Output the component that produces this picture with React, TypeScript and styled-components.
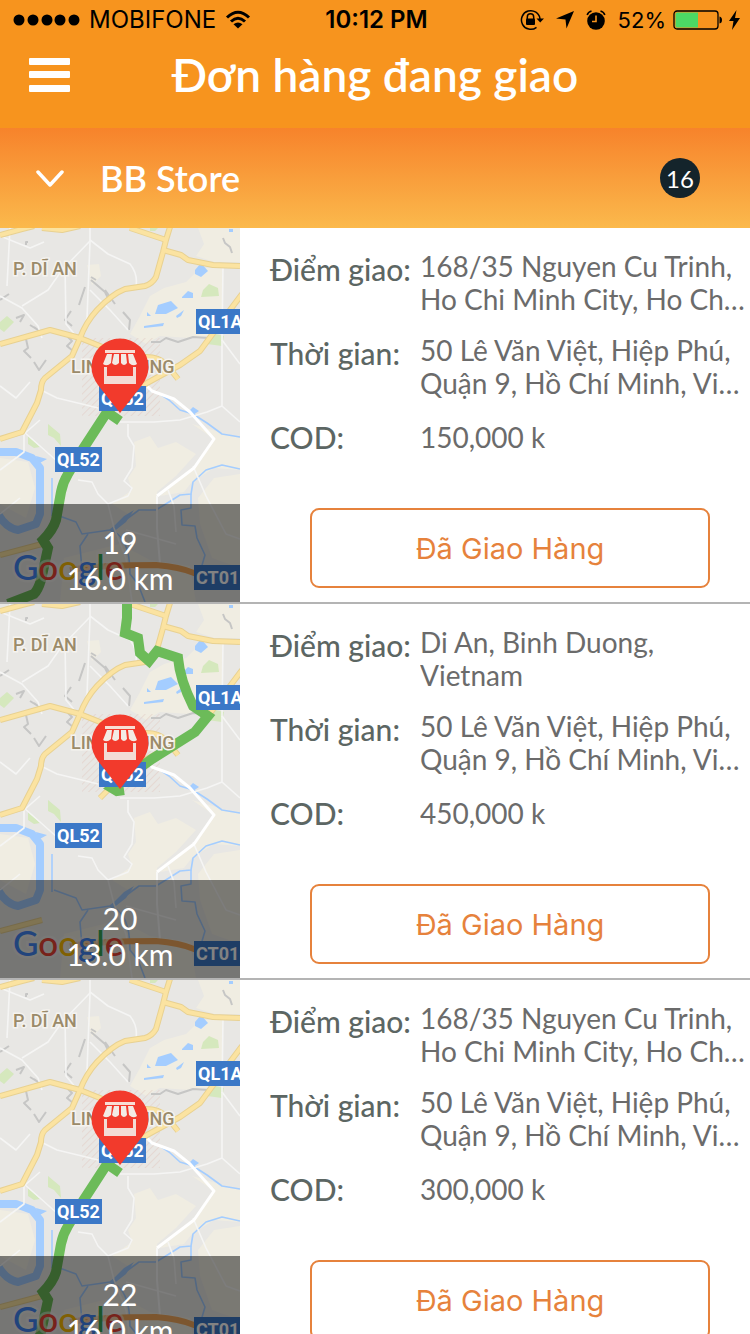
import React, { useId } from 'react';
import styled, { createGlobalStyle } from 'styled-components';

const GlobalStyle = createGlobalStyle`
  *, *::before, *::after { box-sizing: border-box; }
  body { margin: 0; background: #fff; font-family: Lato, sans-serif; }
  h1, h2, p, ul, dl, dd { margin: 0; padding: 0; }
  button { font: inherit; cursor: pointer; }
`;

const Screen = styled.div`
  display: flex;
  flex-direction: column;
  height: 100vh;
  overflow: hidden;
`;

const Header = styled.header`
  flex: none;
  background: #f7941e;
  padding-bottom: 18px;
`;

const StatusBar = styled.div`
  display: grid;
  grid-template-columns: 1fr auto 1fr;
  align-items: center;
  height: 40px;
  padding: 0 10px 0 13px;
  color: #000;
  font-family: Inter, sans-serif;
  font-size: 24px;
  line-height: 40px;
`;

const StatusGroup = styled.div<{ $end?: boolean }>`
  display: flex;
  align-items: center;
  justify-content: ${(p) => (p.$end ? 'flex-end' : 'flex-start')};
  gap: ${(p) => (p.$end ? '7px' : '9px')};
`;

const Clock = styled.span`
  font-size: 24px;
  font-weight: 600;
`;

const Percent = styled.span`
  font-size: 22px;
`;

const StatusIcons = styled.span`
  display: flex;
  align-items: center;
  gap: 12px;
  margin-right: 5px;
`;

const NavBar = styled.div`
  display: grid;
  grid-template-columns: 72px 1fr 72px;
  align-items: center;
  height: 70px;
`;

const MenuButton = styled.button`
  display: flex;
  justify-content: flex-end;
  padding: 0 2px 0 0;
  border: 0;
  background: none;
  color: #fff;
`;

const Title = styled.h1`
  color: #fff;
  font-size: 46px;
  font-weight: 600;
  line-height: 70px;
  text-align: center;
`;

const StoreBar = styled.button`
  flex: none;
  display: flex;
  align-items: center;
  width: 100%;
  height: 100px;
  padding: 0 50px 0 36px;
  border: 0;
  background: linear-gradient(#f7832b, #fbb94c);
  color: #fff;
  text-align: left;
`;

const StoreName = styled.span`
  flex: 1;
  padding-left: 36px;
  font-size: 36px;
  font-weight: 600;
  line-height: 48px;
`;

const Count = styled.span`
  width: 40px;
  height: 40px;
  border-radius: 50%;
  background: #14242b;
  font-size: 24px;
  line-height: 42px;
  text-align: center;
`;

const OrderList = styled.ul`
  flex: 1;
  min-height: 0;
  overflow-y: auto;
  list-style: none;
  scrollbar-width: none;
`;

const OrderRow = styled.li`
  display: flex;
  border-bottom: 2px solid #b4b4b4;
`;

const MapPane = styled.div`
  position: relative;
  flex: none;
  width: 240px;
  height: 374px;
  overflow: hidden;
`;

const Distance = styled.div`
  position: absolute;
  inset: auto 0 0;
  padding: 20px 0 6px;
  background: rgba(0, 0, 0, 0.49);
  color: #fff;
  font-size: 30px;
  line-height: 36px;
  text-align: center;
`;

const Details = styled.div`
  flex: 1;
  min-width: 0;
  display: flex;
  flex-direction: column;
  justify-content: space-between;
  padding: 22px 0 14px 30px;
`;

const Facts = styled.dl`
  display: grid;
  gap: 18px;
`;

const Fact = styled.div`
  display: grid;
  grid-template-columns: 150px 1fr;
`;

const Label = styled.dt`
  color: #5c6663;
  font-size: 30px;
  font-weight: 500;
  line-height: 38px;
  white-space: nowrap;
`;

const Value = styled.dd<{ $single?: boolean }>`
  display: -webkit-box;
  overflow: hidden;
  -webkit-box-orient: vertical;
  -webkit-line-clamp: 2;
  color: #6b6b6b;
  font-size: 28px;
  line-height: ${(p) => (p.$single ? '38px' : '33px')};
`;

const DeliveredButton = styled.button`
  height: 80px;
  margin: 0 40px;
  border: 2px solid #e6823c;
  border-radius: 9px;
  background: #fff;
  color: #e6823c;
  font-family: Inter, sans-serif;
  font-size: 29px;
`;

type Order = { id: number; km: string; address: string; cod: string; route: 'south' | 'north' };

const ORDERS: Order[] = [
  { id: 19, km: '16.0 km', address: '168/35 Nguyen Cu Trinh, Ho Chi Minh City, Ho Chi Minh, Vietnam', cod: '150,000 k', route: 'south' },
  { id: 20, km: '13.0 km', address: 'Di An, Binh Duong, Vietnam', cod: '450,000 k', route: 'north' },
  { id: 22, km: '16.0 km', address: '168/35 Nguyen Cu Trinh, Ho Chi Minh City, Ho Chi Minh, Vietnam', cod: '300,000 k', route: 'south' },
];

const ROUTES = {
  south: 'M120 193 L107 184 L83 221 L68 246 Q63 254 61 264 L56 292 Q53 302 43 312 L48 320 L45 334 L41 352 Q38 362 34 366 L8 376',
  north: 'M127 0 V14 L125 29 L138 34 L140 49 L149 57 L157 47 L178 54 Q180 76 193 102 L208 112 L195 128 L152 155 L120 178 L112 184 L117 187 L124 186',
};

const ROADS = [
  'M0 7 L22 1 L34 -2',
  'M42 0 L62 2 L80 -2',
  'M130 0 L166 12',
  'M170 -1 L166 12 L163 24 L156 49 Q152 56 145 58 L125 61 Q112 66 97 82 Q86 94 80 110 L72 128 L45 150 Q41 154 41 162 L37 175 L22 204 L0 211',
  'M163 22 L181 27 L188 32 L213 37 L240 38',
  'M0 116 L50 102 L80 110 L100 118 L120 126 L143 129 Q158 128 166 136 L178 151',
  'M242 66 L230 82 L214 104 L200 123 L180 137 L147 155 L118 176 L100 194',
  'M0 327 L42 316',
];

const LANES = [
  'M10 0 L7 58', 'M0 68 L22 80 L38 98 L42 110', 'M90 0 V14 L87 90 L82 104', 'M90 12 L108 26 L130 36 Q138 46 136 58',
  'M90 13 L62 42 L48 62 L22 78', 'M65 38 L66 96 L76 108', 'M90 62 L110 82 L128 102', 'M0 158 L16 170 L30 154',
  'M41 162 L57 170 L82 176 L98 180', 'M0 242 L24 224 V206 L40 192', 'M24 204 L40 218 L58 234',
  'M120 194 L154 194 L180 192 L207 184 L222 178 V112', 'M128 196 V208 L134 218 L132 240 L124 253 L132 260 L128 268 L108 276',
  'M78 252 L92 254 L98 266 L108 276 L114 300 L126 330 L132 374', 'M223 36 L222 112 L240 136', 'M193 238 L206 268 L226 306 L240 311',
  'M168 262 L174 278 L176 304', 'M0 8 L30 20 L44 14', 'M126 302 L176 316', 'M222 178 L240 194', 'M0 286 L20 270',
];

const MAIN_LANES = ['M147 158 L152 163 L174 171 L190 184 L214 211 L194 240 L157 268'];

const ALLEYS = [
  'M28 14 H26 V17 M91 49 L96 52 M91 52 L105 64 L110 74 M85 59 L79 77', 'M123 84 L130 92 L129 102 M71 83 L65 92 L72 98',
  'M16 90 L24 87 L20 94 M30 97 L38 102 L34 99', 'M26 111 L28 120 L24 123 L31 130 M34 134 L39 142 L46 132',
  'M68 109 L72 113 L67 118 L73 123', 'M223 10 L225 15 L230 19 L232 25 M0 72 L9 66 M151 114 H160 L166 110 L178 114 L193 109 L209 110', 'M105 62 L115 76',
];

const STREAMS = [
  'M52 250 V288', 'M149 162 L160 166 L169 172 L180 182 L193 186 L207 195 L222 206 L240 209',
  'M240 241 L222 237 L206 242 L193 254 L191 266 L180 267 L169 274 L156 282 L139 282 L128 290 L110 302',
  'M110 302 L82 306 L76 294 L54 286', 'M88 306 L80 318 L82 342', 'M191 266 V280 L181 282 L182 297 L195 298 L197 310 L205 327 L200 344', 'M110 302 Q130 308 130 346 L138 356 L145 374',
];

const Path = ({ d, color, width }: { d: string; color: string; width: number }) => (
  <path d={d} fill="none" stroke={color} strokeWidth={width} strokeLinejoin="round" />
);

function RouteMap({ route }: { route: Order['route'] }) {
  const hatch = useId();
  return (
    <svg width="240" height="374" viewBox="0 0 240 374" role="img" aria-label="Linh Trung">
      <defs>
        <pattern id={hatch} width="5" height="5" patternUnits="userSpaceOnUse" patternTransform="rotate(45)">
          <path d="M0 0V5" stroke="#e2c9c1" strokeWidth="1" />
        </pattern>
      </defs>
      <rect width="240" height="374" fill="#e8e7e4" />
      <g fill="#f0ede2">
        <path d="M198 0 H240 V34 L214 34 L196 28 L204 16 Z" />
        <path d="M200 40 H222 V84 L208 108 L190 110 L160 108 L146 116 L130 106 L140 88 L150 68 L164 60 L186 54 Z" />
        <path d="M87 37 L99 36 L101 48 L92 57 Z M0 230 L28 234 L35 260 L26 290 L0 276 Z" />
        <path d="M192 196 L240 210 V242 L214 240 L192 254 L184 264 L160 268 L194 240 L214 211 Z" />
        <path d="M240 246 L214 250 L198 270 L200 296 L212 330 L240 340 Z" />
        <path d="M134 214 L150 208 L158 220 L176 214 L196 226 L176 248 L157 264 V280 L128 286 L112 276 L132 262 L128 250 L136 238 Z" />
        <path d="M64 330 L120 316 L150 332 L190 338 L196 374 H60 Z" />
      </g>
      <g fill="#d5e8bd">
        <path d="M0 94 L7 88 L14 94 L4 104 L0 101 Z M203 62 L209 56 L218 60 L219 68 L201 69 Z M207 116 L216 106 L224 108 L222 118 Z" />
        <path d="M48 196 L60 206 L61 218 L54 210 L48 207 Z M28 208 L40 219 L34 220 L28 216 Z M150 0 H158 L155 3 H150 Z" />
      </g>
      <rect x="82" y="110" width="78" height="78" fill={`url(#${hatch})`} />
      {ALLEYS.map((d) => <Path key={d} d={d} color="#c6c6c5" width={2} />)}
      <g fill="#a4cdff">
        <path d="M195 42 L201 35 L208 43 L201 49 L195 46 Z M182 69 L188 63 L193 65 L193 70 H182 Z" />
        <path d="M155 86 L158 77 L171 73 L178 80 L166 86 Z M147 84 L151 88 H147 Z M144 98 L164 95 L163 98 L144 100 Z M176 88 L184 82 L181 88 L177 90 Z" />
        <path d="M188 184 L193 179 L199 183 L193 187 Z M110 302 L124 288 L134 282 L126 294 L112 305 Z M229 1 H233 V4 H229 Z M36 228 L47 231 L38 236 Z" />
      </g>
      <Path d="M-2 224 L16 224 L32 230 L40 240 V286 L36 296 L18 302 Q6 300 -2 286" color="#a4cdff" width={8} />
      {STREAMS.map((d) => <Path key={d} d={d} color="#a4cdff" width={1.6} />)}
      {LANES.map((d) => <Path key={d} d={d} color="#f5f5f4" width={1.6} />)}
      {MAIN_LANES.map((d) => <Path key={d} d={d} color="#ffffff" width={3} />)}
      <Path d="M157 268 V300 L160 336" color="#f8f8f7" width={2} />
      {ROADS.map((d) => <Path key={d} d={d} color="#e8d191" width={6} />)}
      {ROADS.map((d) => <Path key={d} d={d} color="#fbe3a1" width={4} />)}
      <Path d="M70 342 Q98 337 156 337 Q180 339 194 345 L240 352" color="#f4a95d" width={6} />
      <path d={ROUTES[route]} fill="none" stroke="#6cbb59" strokeWidth="10" />
      <g fontFamily="Roboto, sans-serif" fontSize="18" fontWeight="500" fill="#9b8b6a" stroke="#f5f3ef" strokeWidth="3" paintOrder="stroke">
        <text x="13" y="47">P. DĨ AN</text>
        <text x="71" y="145">LINH TRUNG</text>
      </g>
      <g fill="#3b78c7">
        <rect x="196" y="81" width="46" height="25" />
        <rect x="99" y="158" width="47" height="25" />
        <rect x="55" y="219" width="47" height="25" />
        <rect x="194" y="337" width="48" height="25" />
      </g>
      <g fontFamily="Roboto, sans-serif" fontSize="18" fontWeight="700" fill="#fff">
        <text x="198" y="100">QL1A</text>
        <text x="101" y="177">QL52</text>
        <text x="57" y="238">QL52</text>
        <text x="196" y="356">CT01</text>
      </g>
      <text x="13" y="352" fontFamily="Lato, sans-serif" fontSize="35" fontWeight="500" stroke="#f4f3ef" strokeOpacity="0.5" strokeWidth="5" paintOrder="stroke">
        <tspan fill="#4285f4">G</tspan><tspan fill="#ea4335">o</tspan><tspan fill="#fbbc05">o</tspan><tspan fill="#4285f4">g</tspan><tspan fill="#34a853">l</tspan><tspan fill="#ea4335">e</tspan>
      </text>
      <path d="M120 185 L98 157 Q91.500 148 91.500 139 A28.500 28.500 0 0 1 148.500 139 Q148.500 148 142 157 Z" fill="#f23a2c" />
      <path d="M105 122 H135 V125 H105 Z" fill="#f8ded5" />
      <path d="M107 126 H112 L111 135 Q107 139 103 136 Z M114 126 H119 V135 Q115 139 112 135 Z M121 126 H126 L127 135 Q124 139 121 135 Z M128 126 H133 L137 136 Q133 139 129 135 Z" fill="#f3ebe5" />
      <path d="M104 139 H107 V148 H133 V139 H136 V156 H104 Z" fill="#f3dcd5" />
    </svg>
  );
}

const Signal = () => (
  <svg width="67" height="12" viewBox="0 0 67 12" aria-hidden="true">
    {[6, 20, 34, 47, 61].map((x) => <circle key={x} cx={x} cy="6" r="5.500" />)}
  </svg>
);

const Wifi = () => (
  <svg width="26" height="20" viewBox="0 0 26 20" fill="none" stroke="#000" strokeWidth="3" aria-hidden="true">
    <path d="M2 7.500 Q13 -3 24 7.500 M6 11.500 Q13 5 20 11.500" />
    <path d="M13 18.500 L8.500 14.200 Q13 10.600 17.500 14.200 Z" fill="#000" stroke="none" />
  </svg>
);

const RotationLock = () => (
  <svg width="24" height="22" viewBox="0 0 24 22" fill="none" stroke="#000" aria-hidden="true">
    <path d="M16.500 18.300 A9.300 9.300 0 1 1 20 10" strokeWidth="1.500" />
    <path d="M16.500 9.500 H24 L20.200 13.500 Z" fill="#000" stroke="none" />
    <path d="M7.300 10 V8 a3.200 3.200 0 0 1 6.400 0 V10" strokeWidth="1.500" />
    <rect x="6" y="9.500" width="9" height="6.500" rx="1" fill="#000" stroke="none" />
  </svg>
);

const LocationArrow = () => (
  <svg width="18" height="18" viewBox="0 0 18 18" aria-hidden="true">
    <path d="M18 0 L10.500 17.500 L9.500 8.500 L0 7.500 Z" />
  </svg>
);

const Alarm = () => (
  <svg width="20" height="20" viewBox="0 0 20 20" aria-hidden="true">
    <circle cx="10" cy="11" r="8.800" />
    <path d="M1.200 5 Q2 2 5.500 1 M18.800 5 Q18 2 14.500 1" fill="none" stroke="#000" strokeWidth="1.600" />
    <path d="M10 5.500 V11.500 H6" fill="none" stroke="#f7941e" strokeWidth="1.600" />
  </svg>
);

const Battery = () => (
  <svg width="49" height="20" viewBox="0 0 49 20" aria-hidden="true">
    <rect x="1" y="1" width="44" height="18" rx="3" fill="none" stroke="#000" strokeWidth="1.300" />
    <path d="M4 2.500 H25 V17.500 H4 Q2.500 17.500 2.500 16 V4 Q2.500 2.500 4 2.500 Z" fill="#4cd964" />
    <path d="M46.500 6.500 Q49 7 49 10 Q49 13 46.500 13.500 Z" />
  </svg>
);

const Bolt = () => (
  <svg width="11" height="20" viewBox="0 0 11 20" aria-hidden="true">
    <path d="M7.500 0 L0 11 H4.500 L3 20 L11 8 H6 Z" />
  </svg>
);

export default function App() {
  return (
    <>
      <GlobalStyle />
      <Screen>
        <Header>
          <StatusBar>
            <StatusGroup>
              <Signal />
              <span>MOBIFONE</span>
              <Wifi />
            </StatusGroup>
            <Clock>10:12 PM</Clock>
            <StatusGroup $end>
              <StatusIcons>
                <RotationLock />
                <LocationArrow />
                <Alarm />
              </StatusIcons>
              <Percent>52%</Percent>
              <Battery />
              <Bolt />
            </StatusGroup>
          </StatusBar>
          <NavBar>
            <MenuButton aria-label="Menu">
              <svg width="41" height="34" viewBox="0 0 41 34" fill="currentColor" aria-hidden="true">
                <rect width="41" height="7" rx="1" />
                <rect y="13" width="41" height="7" rx="1" />
                <rect y="27" width="41" height="7" rx="1" />
              </svg>
            </MenuButton>
            <Title>Đơn hàng đang giao</Title>
          </NavBar>
        </Header>
        <StoreBar aria-expanded="true">
          <svg width="28" height="18" viewBox="0 0 28 18" fill="none" stroke="currentColor" strokeWidth="3.500" strokeLinecap="round" strokeLinejoin="round" aria-hidden="true">
            <path d="M2 3 L14 16 L26 3" />
          </svg>
          <StoreName>BB Store</StoreName>
          <Count>16</Count>
        </StoreBar>
        <OrderList>
          {ORDERS.map((order) => (
            <OrderRow key={order.id}>
              <MapPane>
                <RouteMap route={order.route} />
                <Distance>
                  <p>{order.id}</p>
                  <p>{order.km}</p>
                </Distance>
              </MapPane>
              <Details>
                <Facts>
                  <Fact>
                    <Label>Điểm giao:</Label>
                    <Value>{order.address}</Value>
                  </Fact>
                  <Fact>
                    <Label>Thời gian:</Label>
                    <Value>50 Lê Văn Việt, Hiệp Phú, Quận 9, Hồ Chí Minh, Việt Nam</Value>
                  </Fact>
                  <Fact>
                    <Label>COD:</Label>
                    <Value $single>{order.cod}</Value>
                  </Fact>
                </Facts>
                <DeliveredButton>Đã Giao Hàng</DeliveredButton>
              </Details>
            </OrderRow>
          ))}
        </OrderList>
      </Screen>
    </>
  );
}
